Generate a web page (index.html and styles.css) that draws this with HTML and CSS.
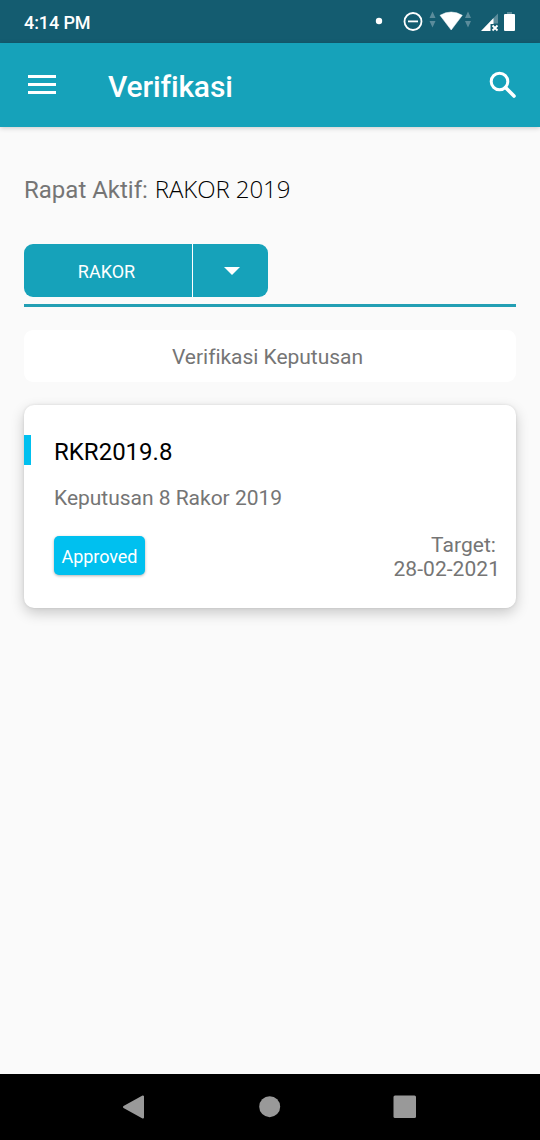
FILE: index.html
```html
<!DOCTYPE html>
<html lang="id">
<head>
<meta charset="utf-8">
<title>Verifikasi</title>
<link rel="stylesheet" href="styles.css">
</head>
<body>
<div class="screen">
  <div class="status">
    <span class="clock">4:14 PM</span>
    <svg class="status-icons" width="150" height="22" viewBox="372 10 150 22" fill="#fff">
      <circle cx="379" cy="21" r="3.200"/>
      <circle cx="413" cy="21.500" r="8.500" fill="none" stroke="#fff" stroke-width="1.800"/>
      <path d="M408 20.500h10v1.800h-10z"/>
      <path d="M432.500 11.500l3 6.500h-6zM432.500 27.500l-3-6.500h6zM468 11.500l3 6.500h-6zM468 27.500l-3-6.500h6z" fill="#5b8c9b"/>
      <path d="M440 15.300Q451.200 8.700 462.300 15.300L451.200 30z" stroke="#fff" stroke-width=".5"/>
      <path d="M498 13.500V23.500H493V18.500z" fill="#5b8c9b"/>
      <path d="M481 31L493.500 18V24H490.500V31z"/>
      <path d="M492.500 25.500l5 5M497.500 25.500l-5 5" stroke="#fff" stroke-width="1.800"/>
      <path d="M507 12h5v2.500h-5z" fill="#5b8c9b"/>
      <rect x="504" y="14" width="11" height="17" rx="1"/>
    </svg>
  </div>
  <header class="toolbar">
    <svg class="menu" width="28" height="19" viewBox="0 0 28 19" fill="#fff"><path d="M0 0h28v3H0zM0 8h28v3H0zM0 16h28v3H0z"/></svg>
    <h1 class="title">Verifikasi</h1>
    <svg class="search" width="28" height="28" viewBox="0 0 28 28" fill="none" stroke="#fff"><circle cx="10.500" cy="10.500" r="8.300" stroke-width="3"/><path d="M16.500 16.500L25 25" stroke-width="3.600" stroke-linecap="round"/></svg>
  </header>
  <main class="content">
    <p class="active"><span class="label">Rapat Aktif: </span><span class="meeting">RAKOR 2019</span></p>
    <div class="select">
      <span class="select-text">RAKOR</span>
      <span class="select-arrow"><svg width="16" height="8" viewBox="0 0 16 8"><path d="M0 0h16L8 8z" fill="#fff"/></svg></span>
    </div>
    <div class="rule"></div>
    <div class="section"><span>Verifikasi Keputusan</span></div>
    <article class="card">
      <div class="mark"></div>
      <div class="card-body">
        <h2 class="code">RKR2019.8</h2>
        <p class="desc">Keputusan 8 Rakor 2019</p>
        <div class="card-foot">
          <span class="badge">Approved</span>
          <div class="target"><span class="target-label">Target:</span><span>28-02-2021</span></div>
        </div>
      </div>
    </article>
  </main>
  <nav class="navbar">
    <svg width="540" height="66" viewBox="0 0 540 66" fill="#999" stroke="#999" stroke-linejoin="round"><path d="M124 33L143 22.500V43.500z" stroke-width="2"/><circle cx="269.700" cy="32.700" r="10.500" stroke="none"/><rect x="393.500" y="21.500" width="22.500" height="22.500" rx="1.500" stroke="none"/></svg>
  </nav>
</div>
</body>
</html>
```

FILE: styles.css
```css
* { box-sizing: border-box; }
body, h1, h2, p { margin: 0; font-weight: 400; }
body { font-family: Roboto, sans-serif; background: #fafafa; color: #757575; }
svg { display: block; flex: none; }
.screen { width: 540px; height: 1140px; display: flex; flex-direction: column; overflow: hidden; }
.status { height: 43px; background: #145c70; display: flex; justify-content: space-between; padding: 10px 18px 0 24px; }
.clock { color: #fff; font-size: 18px; font-weight: 500; line-height: 25px; letter-spacing: -0.1px; }
.toolbar { height: 84px; flex: none; background: #16a2ba; display: flex; align-items: center; padding: 0 23px 0 28px; box-shadow: 0 1px 5px rgba(0,0,0,.2); }
.menu { margin-bottom: 2px; }
.title { color: #fff; font-size: 30px; font-weight: 500; line-height: 36px; margin: 3px 0 0 52px; flex: 1; letter-spacing: -0.15px; }
.content { flex: 1; padding: 45px 24px 0; display: flex; flex-direction: column; }
.active { display: flex; height: 36px; line-height: 34px; font-size: 24px; white-space: pre; }
.label { line-height: 37px; }
.meeting { font-family: "Open Sans", sans-serif; font-weight: 300; color: #000; margin-left: 1px; letter-spacing: -0.08px; }
.select { margin-top: 36px; width: 244px; height: 53px; display: flex; color: #fff; border-radius: 9px; overflow: hidden; background: #16a2ba; }
.select-text { width: 169px; border-right: 1px solid #fff; font-size: 18px; line-height: 55px; text-align: center; padding-right: 3px; }
.select-arrow { flex: 1; display: flex; align-items: center; justify-content: center; padding-left: 3px; }
.rule { height: 3px; background: #239fb4; margin-top: 7px; }
.section { margin-top: 23px; height: 52px; flex: none; border-radius: 9px; background: #fff; text-align: center; font-size: 21px; line-height: 54px; padding-right: 5px; letter-spacing: -0.03px; }
.card { margin-top: 23px; height: 203px; flex: none; background: #fff; border-radius: 10px; display: flex; box-shadow: 0 5px 14px rgba(0,0,0,.2), 0 0 3px rgba(0,0,0,.1); }
.mark { width: 7px; height: 30px; margin-top: 30px; background: #00c0ef; }
.card-body { flex: 1; padding: 31px 16px 0 23px; }
.code { color: #000; font-size: 24px; line-height: 32px; }
.desc { font-size: 21px; line-height: 28px; margin-top: 16px; letter-spacing: -0.02px; }
.card-foot { display: flex; justify-content: space-between; margin-top: 21px; }
.badge { width: 91px; height: 39px; margin-top: 3px; background: #00c0ef; border-radius: 5px; color: #fff; font-size: 18px; line-height: 41px; text-align: center; box-shadow: 0 1px 3px rgba(0,0,0,.3); letter-spacing: -0.05px; }
.target { display: flex; flex-direction: column; align-items: flex-end; font-size: 21px; line-height: 24px; letter-spacing: 0.05px; }
.target-label { padding-right: 4px; }
.navbar { height: 66px; flex: none; background: #000; }
```
